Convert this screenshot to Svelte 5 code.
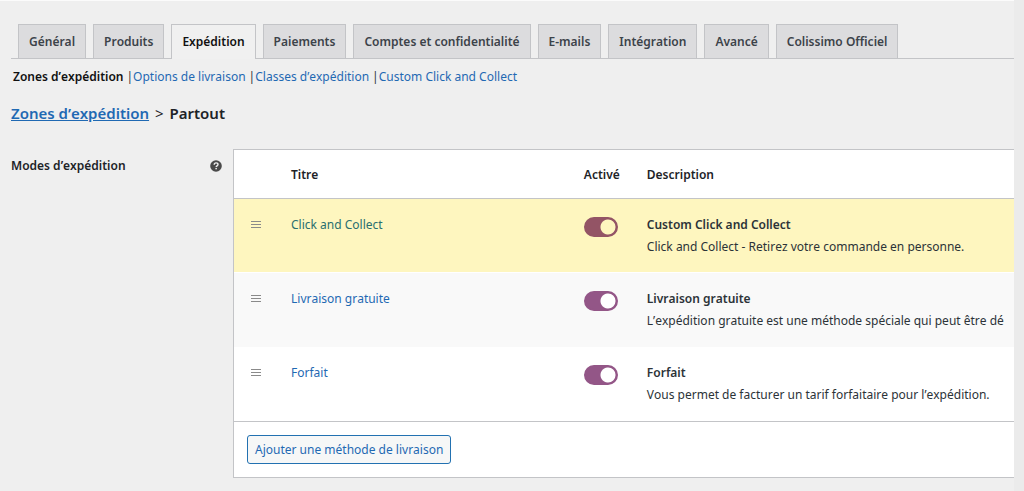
<script lang="ts">
  type Method = {
    id: number;
    title: string;
    name: string;
    description: string;
    enabled: boolean;
    highlight?: boolean;
  };

  const tabs = [
    'Général',
    'Produits',
    'Expédition',
    'Paiements',
    'Comptes et confidentialité',
    'E-mails',
    'Intégration',
    'Avancé',
    'Colissimo Officiel',
  ];

  const sections = [
    'Zones d’expédition',
    'Options de livraison',
    'Classes d’expédition',
    'Custom Click and Collect',
  ];

  let activeTab = $state('Expédition');
  let activeSection = $state('Zones d’expédition');

  let methods = $state<Method[]>([
    {
      id: 1,
      title: 'Click and Collect',
      name: 'Custom Click and Collect',
      description: 'Click and Collect - Retirez votre commande en personne.',
      enabled: true,
      highlight: true,
    },
    {
      id: 2,
      title: 'Livraison gratuite',
      name: 'Livraison gratuite',
      description: 'L’expédition gratuite est une méthode spéciale qui peut être dé',
      enabled: true,
    },
    {
      id: 3,
      title: 'Forfait',
      name: 'Forfait',
      description: 'Vous permet de facturer un tarif forfaitaire pour l’expédition.',
      enabled: true,
    },
  ]);

  function selectTab(event: Event, tab: string) {
    event.preventDefault();
    activeTab = tab;
  }

  function selectSection(event: Event, section: string) {
    event.preventDefault();
    activeSection = section;
  }
</script>

<div class="page">
  <nav class="tabs">
    {#each tabs as tab}
      <a href="#tab" class:active={activeTab === tab} onclick={(e) => selectTab(e, tab)}>{tab}</a>
    {/each}
  </nav>

  <ul class="sections">
    {#each sections as section}
      <li>
        <a href="#section" class:current={activeSection === section} onclick={(e) => selectSection(e, section)}>{section}</a>
      </li>
    {/each}
  </ul>

  <h2><a href="#zones">Zones d’expédition</a> <span>&gt;</span> Partout</h2>

  <div class="field">
    <div class="field-label">
      <span>Modes d’expédition</span>
      <svg class="help" viewBox="0 0 12 12" role="img" aria-label="Aide">
        <circle cx="6" cy="6" r="5.8" fill="#4a4a4a" />
        <path d="M4.2 4.7C4.2 3.5 5 2.9 6.1 2.9s1.9.6 1.9 1.6c0 1.3-1.8 1.3-1.8 2.5" fill="none" stroke="#efefef" stroke-width="1.4" />
        <rect x="5.4" y="7.9" width="1.5" height="1.4" fill="#efefef" />
      </svg>
    </div>

    <div class="card">
      <table>
        <thead>
          <tr>
            <th class="sort"></th>
            <th class="title">Titre</th>
            <th class="enabled">Activé</th>
            <th class="description">Description</th>
          </tr>
        </thead>
        <tbody>
          {#each methods as method (method.id)}
            <tr class:highlight={method.highlight}>
              <td class="sort">
                <svg class="handle" viewBox="0 0 10 8" aria-hidden="true">
                  <path d="M0 .5h10M0 3.5h10M0 6.5h10" />
                </svg>
              </td>
              <td class="title"><a href="#method">{method.title}</a></td>
              <td class="enabled">
                <input type="checkbox" aria-label="Activer {method.title}" bind:checked={method.enabled} />
              </td>
              <td class="description">
                <strong>{method.name}</strong>
                <p>{method.description}</p>
              </td>
            </tr>
          {/each}
        </tbody>
      </table>
      <div class="footer">
        <button type="button">Ajouter une méthode de livraison</button>
      </div>
    </div>
  </div>
</div>

<style>
  :global(body) {
    background: #ebebeb;
  }
  .page {
    box-sizing: border-box;
    min-height: 100vh;
    margin-right: 10px;
    padding: 23px 0 13px 11px;
    border-top: 1px solid #fbfbfb;
    background: #efefef;
    color: #2c3338;
    font-family: "Segoe UI", "Noto Sans", "Open Sans", sans-serif;
    font-size: 12px;
    font-kerning: none;
    line-height: 22px;
    overflow: hidden;
  }
  a {
    color: #1f69b3;
    text-decoration: none;
  }
  .tabs {
    display: flex;
    gap: 7px;
    padding-left: 7px;
    border-bottom: 1px solid #c3c4c7;
  }
  .tabs a {
    padding: 6px 10px 5px;
    border: 1px solid #c3c4c7;
    border-bottom: none;
    background: #dcdcde;
    color: #3c434a;
    font-weight: 600;
    white-space: nowrap;
  }
  .tabs a.active {
    margin-bottom: -1px;
    background: #f0f0f0;
    color: #111;
  }
  .sections {
    display: flex;
    margin: 7px 0 0 2px;
    padding: 0;
    list-style: none;
  }
  .sections li + li::before {
    content: "|";
    margin-left: 3px;
  }
  .sections a.current {
    color: #111;
    font-weight: 600;
  }
  h2 {
    margin: 14px 0 0;
    color: #1d2327;
    font-size: 15px;
    font-weight: 600;
    line-height: 22px;
  }
  h2 a {
    text-decoration: underline;
  }
  h2 span {
    margin: 0 2px;
    font-weight: 400;
  }
  .field {
    display: flex;
    margin-top: 25px;
  }
  .field-label {
    display: flex;
    flex: 0 0 222px;
    box-sizing: border-box;
    justify-content: space-between;
    align-items: center;
    align-self: flex-start;
    padding: 6px 11px 0 0;
    color: #1d2327;
    font-weight: 600;
  }
  .help {
    width: 12px;
    height: 12px;
  }
  .card {
    flex: 1;
    min-width: 0;
    border: 1px solid #c3c4c7;
    border-right: none;
    background: #fff;
    overflow: hidden;
  }
  table {
    width: 100%;
    border-collapse: separate;
    border-spacing: 0;
    table-layout: fixed;
  }
  th {
    box-sizing: border-box;
    height: 49px;
    padding: 2px 0 0 15px;
    border-bottom: 1px solid #c3c4c7;
    color: #1d2327;
    font-weight: 600;
    text-align: left;
  }
  td {
    box-sizing: border-box;
    height: 74px;
    padding: 15px 0 0 15px;
    vertical-align: top;
    white-space: nowrap;
  }
  th.sort {
    width: 42px;
  }
  th.enabled {
    width: 63px;
  }
  th.description {
    width: 49%;
  }
  tbody tr:nth-child(even) td {
    background: #f9f9f9;
  }
  tbody tr.highlight td {
    border-bottom: 1px solid #fff;
    background: #fef6bf;
  }
  .highlight a {
    color: #2a6f6f;
  }
  .handle {
    display: block;
    width: 10px;
    height: 8px;
    margin: 7px 0 0 2px;
  }
  .handle path {
    stroke: #8a8a8a;
    stroke-width: 1;
  }
  input[type="checkbox"] {
    display: block;
    box-sizing: border-box;
    appearance: none;
    width: 34px;
    height: 20px;
    margin: 3px 0 0;
    border: 2px solid #935687;
    border-radius: 10px;
    background: radial-gradient(circle at 8px 8px, #fff 7px, #935687 8px);
    cursor: pointer;
  }
  input[type="checkbox"]:checked {
    background: radial-gradient(circle at 22px 8px, #fff 7px, #935687 8px);
  }
  .highlight input[type="checkbox"] {
    border-color: #935465;
    background: radial-gradient(circle at 8px 8px, #fef6bf 7px, #935465 8px);
  }
  .highlight input[type="checkbox"]:checked {
    background: radial-gradient(circle at 22px 8px, #fef6bf 7px, #935465 8px);
  }
  strong {
    display: block;
    font-weight: 600;
  }
  p {
    margin: 0;
  }
  .footer {
    padding: 13px;
    border-top: 1px solid #c3c4c7;
  }
  button {
    display: block;
    height: 29px;
    padding: 0 7px;
    border: 1px solid #2271b1;
    border-radius: 3px;
    background: #f6f7f7;
    color: #1f69b3;
    font: inherit;
    cursor: pointer;
  }
</style>
